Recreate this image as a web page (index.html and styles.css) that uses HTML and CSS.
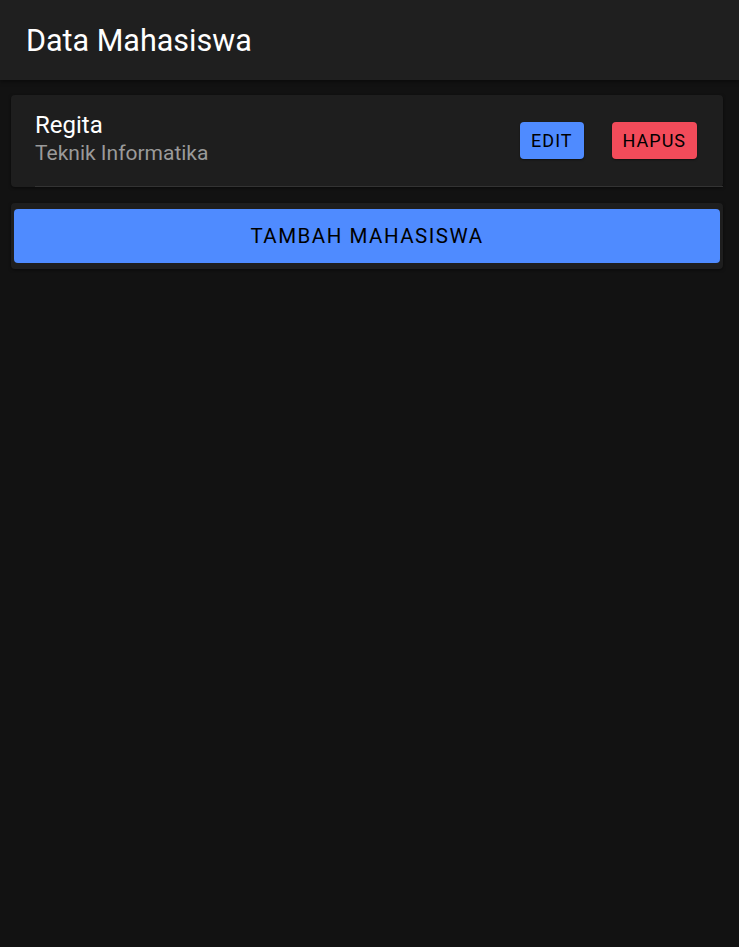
FILE: index.html
```html
<!DOCTYPE html>
<html lang="id">
<head>
<meta charset="utf-8">
<title>Data Mahasiswa</title>
<link rel="stylesheet" href="styles.css">
</head>
<body>
<header class="appbar">
  <h1 class="appbar-title">Data Mahasiswa</h1>
</header>
<main class="content">
  <section class="card student">
    <div class="student-info">
      <div class="student-name">Regita</div>
      <div class="student-major">Teknik Informatika</div>
    </div>
    <div class="student-actions">
      <button class="btn btn-edit">EDIT</button>
      <button class="btn btn-delete">HAPUS</button>
    </div>
  </section>
  <section class="card add-card">
    <button class="btn btn-add">TAMBAH MAHASISWA</button>
  </section>
</main>
</body>
</html>
```
FILE: styles.css
```css
* { box-sizing: border-box; }
html, body { margin: 0; padding: 0; }
body {
  background: #121212;
  font-family: Roboto, "Noto Sans", sans-serif;
  color: #fff;
  min-height: 947px;
}
.appbar {
  height: 80px;
  background: #1f1f1f;
  display: flex;
  align-items: center;
  padding-left: 26px;
  box-shadow: 0 2px 4px rgba(0,0,0,0.4);
}
.appbar-title {
  margin: 0;
  font-size: 30.5px;
  font-weight: 400;
  color: #fff;
}
.content {
  padding: 15px 16px 0 11px;
  display: flex;
  flex-direction: column;
  gap: 16px;
}
.card {
  background: #1e1e1e;
  border-radius: 4px;
  box-shadow: 0 1px 3px rgba(0,0,0,0.5);
}
.student {
  height: 92px;
  display: flex;
  align-items: center;
  justify-content: space-between;
  padding: 0 26px 0 24px;
  position: relative;
}
.student::after {
  content: "";
  position: absolute;
  left: 24px;
  right: 0;
  bottom: 0;
  height: 1px;
  background: #333;
}
.student-info { margin-top: -5px; }
.student-name {
  font-size: 24px;
  line-height: 28px;
  color: #fff;
}
.student-major {
  font-size: 21px;
  line-height: 28px;
  color: #9a9a9a;
}
.student-actions {
  display: flex;
  gap: 28px;
  margin-top: -1px;
}
.btn {
  border: none;
  font-family: Roboto, "Noto Sans", sans-serif;
  color: #000;
  border-radius: 4px;
  letter-spacing: 1px;
  cursor: pointer;
}
.btn-edit, .btn-delete {
  height: 37px;
  font-size: 18px;
  padding: 0 11px;
  box-shadow: 0 1px 2px rgba(0,0,0,0.5);
}
.btn-edit { background: #4f8bff; }
.btn-delete { background: #f24b5a; }
.add-card {
  padding: 6px 3px 6px 3px;
}
.btn-add {
  width: 100%;
  height: 54px;
  background: #4f8bff;
  font-size: 20.5px;
  letter-spacing: 1.5px;
  display: block;
}
```
